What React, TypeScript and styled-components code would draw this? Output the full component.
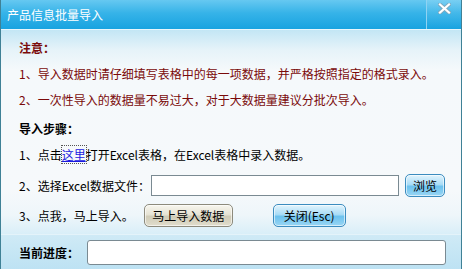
import React from "react";
import styled, { createGlobalStyle } from "styled-components";

const Global = createGlobalStyle`
  html, body { margin: 0; padding: 0; background: #ffffff; }
  body { font-family: "Noto Sans CJK SC", "Liberation Sans", sans-serif; font-size: 12px; }
`;

const Window = styled.div`
  width: 462px;
  height: 269px;
  box-sizing: border-box;
  border-left: 1px solid #3f8196;
  border-right: 1px solid #3f8196;
  display: flex;
  flex-direction: column;
  overflow: hidden;
`;

const TitleBar = styled.div`
  height: 29px;
  flex: none;
  display: flex;
  align-items: center;
  background: linear-gradient(#66c8f1 0%, #36b3e8 45%, #18a3e0 100%);
  border-bottom: 1px solid #e8f6fc;
`;

const Title = styled.div`
  flex: 1;
  padding-left: 6px;
  color: #ffffff;
  font-size: 12px;
  line-height: 29px;
`;

const CloseBox = styled.div`
  width: 35px;
  height: 29px;
  box-sizing: border-box;
  border-left: 1px solid #8fd3f3;
  display: flex;
  align-items: flex-start;
  justify-content: center;
  padding-top: 3px;
  background: linear-gradient(rgba(255,255,255,0.12), rgba(255,255,255,0));
`;

const Body = styled.div`
  flex: 1;
  display: flex;
  flex-direction: column;
  padding: 4px 16px 0 18px;
  background: linear-gradient(
    #c3e6f5 0px,
    #e6f3f9 20px,
    #f5f9fb 40px,
    #f6f9fb 160px,
    #eef6fa 185px,
    #d8eef8 205px
  );
`;

const Row = styled.div<{ $h: number; $mt?: number; $color?: string; $bold?: boolean }>`
  height: ${(p) => p.$h}px;
  margin-top: ${(p) => p.$mt ?? 0}px;
  display: flex;
  align-items: center;
  color: ${(p) => p.$color ?? "#000000"};
  font-weight: ${(p) => (p.$bold ? 700 : 400)};
  font-size: 12px;
  white-space: nowrap;
`;

const Link = styled.a`
  color: #1a1ae0;
  text-decoration: underline;
  outline: 1px dotted #555;
  outline-offset: 0px;
  cursor: pointer;
`;

const TextInput = styled.div<{ $w: number; $h: number; $radius?: number }>`
  width: ${(p) => p.$w}px;
  height: ${(p) => p.$h}px;
  box-sizing: border-box;
  background: #ffffff;
  border: 1px solid #7a8a92;
  border-radius: ${(p) => p.$radius ?? 0}px;
`;

const Button = styled.div<{ $variant: "blue" | "gray"; $w: number; $h: number }>`
  width: ${(p) => p.$w}px;
  height: ${(p) => p.$h}px;
  box-sizing: border-box;
  border-radius: 5px;
  display: flex;
  align-items: center;
  justify-content: center;
  color: #000;
  font-size: 12px;
  border: 1px solid ${(p) => (p.$variant === "blue" ? "#3b8cbf" : "#8c8a7c")};
  background: ${(p) =>
    p.$variant === "blue"
      ? "linear-gradient(#e2f4fd 0%, #a9dcf6 45%, #6cc2ee 55%, #9ad6f4 100%)"
      : "linear-gradient(#f7f6ee 0%, #e6e3d4 45%, #d0ccb8 55%, #e1ddcc 100%)"};
  box-shadow: inset 0 0 0 1px rgba(255, 255, 255, 0.6);
`;

const BottomBar = styled.div`
  height: 34px;
  flex: none;
  display: flex;
  align-items: center;
  gap: 8px;
  padding: 0 0 0 18px;
  background: linear-gradient(#cfeaf6 0%, #bde2f3 100%);
  border-top: 1px solid #e4f3fa;
`;

const Label = styled.span`
  font-weight: 700;
  color: #000;
`;

const Spacer = styled.span<{ $w: number }>`
  display: inline-block;
  width: ${(p) => p.$w}px;
`;

const CloseIcon = () => (
  <svg width="13" height="11" viewBox="0 0 13 11">
    <path d="M2 1.5 L11 9.5 M11 1.5 L2 9.5" stroke="#7aa9c0" strokeWidth="4" strokeLinecap="square" />
    <path d="M2 1.5 L11 9.5 M11 1.5 L2 9.5" stroke="#ffffff" strokeWidth="2.2" strokeLinecap="square" />
  </svg>
);

export default function App() {
  const red = "#7a0a0a";
  return (
    <>
      <Global />
      <Window>
        <TitleBar>
          <Title>产品信息批量导入</Title>
          <CloseBox>
            <CloseIcon />
          </CloseBox>
        </TitleBar>
        <Body>
          <Row $h={26} $color={red} $bold>注意：</Row>
          <Row $h={26} $color={red}>1、导入数据时请仔细填写表格中的每一项数据，并严格按照指定的格式录入。</Row>
          <Row $h={26} $color={red}>2、一次性导入的数据量不易过大，对于大数据量建议分批次导入。</Row>
          <Row $h={26} $mt={3} $bold>导入步骤：</Row>
          <Row $h={26}>
            1、点击<Link>这里</Link>打开Excel表格，在Excel表格中录入数据。
          </Row>
          <Row $h={26} $mt={5}>
            2、选择Excel数据文件：
            <Spacer $w={1} />
            <TextInput $w={248} $h={21} />
            <Spacer $w={6} />
            <Button $variant="blue" $w={40} $h={23}>浏览</Button>
          </Row>
          <Row $h={26} $mt={4}>
            3、点我，马上导入。
            <Spacer $w={10} />
            <Button $variant="gray" $w={89} $h={23}>马上导入数据</Button>
            <Spacer $w={40} />
            <Button $variant="blue" $w={73} $h={23}>关闭(Esc)</Button>
          </Row>
        </Body>
        <BottomBar>
          <Label>当前进度：</Label>
          <TextInput $w={359} $h={25} $radius={3} />
        </BottomBar>
      </Window>
    </>
  );
}
